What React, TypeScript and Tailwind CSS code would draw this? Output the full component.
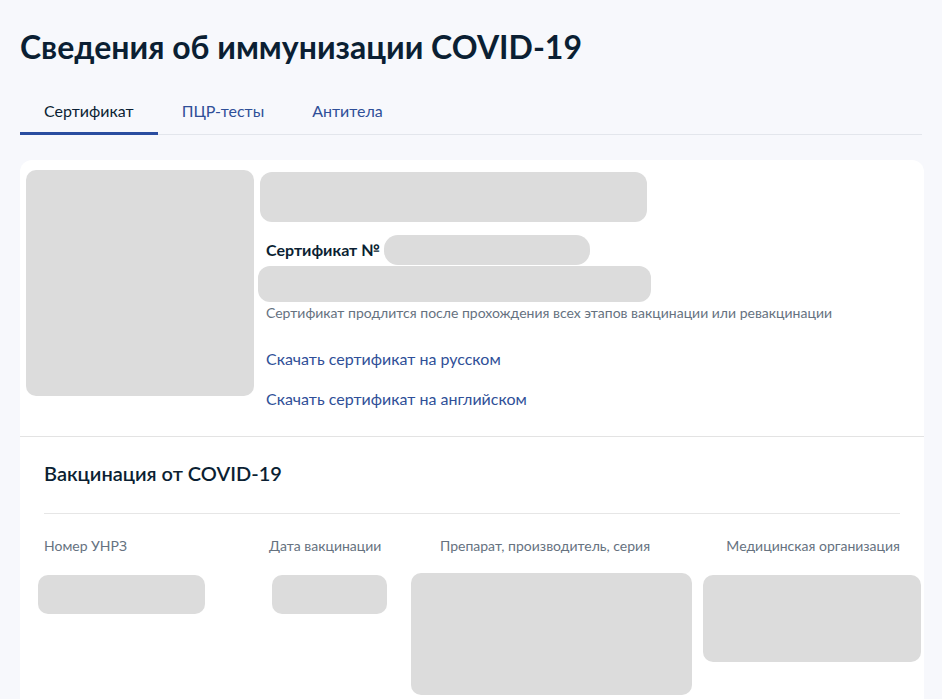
import React from 'react';

const Blank: React.FC<{ className: string }> = ({ className }) => (
  <div className={`shrink-0 bg-[#dcdcdc] ${className}`} />
);

const tabs = [
  { label: 'Сертификат', active: true },
  { label: 'ПЦР-тесты', active: false },
  { label: 'Антитела', active: false },
];

const columns = ['Номер УНРЗ', 'Дата вакцинации', 'Препарат, производитель, серия', 'Медицинская организация'];

const App: React.FC = () => {
  return (
    <div className="min-h-[699px] w-[942px] overflow-hidden bg-[#f7f8fc] font-['Lato',sans-serif] text-[#0b1f33]">
      <div className="px-5 pt-[27px]">
        <h1 className="text-[32px] font-bold leading-[40px]">Сведения об иммунизации COVID-19</h1>

        {/* вкладки */}
        <div className="mt-[34px] flex border-b border-[#e3e6ec]">
          {tabs.map((tab) => (
            <div
              key={tab.label}
              className={`-mb-px px-6 pb-[11px] text-[16px] leading-5 ${
                tab.active ? 'border-b-[3px] border-[#2a4da0] text-[#0b1f33]' : 'border-b-[3px] border-transparent text-[#2f4f98]'
              }`}
            >
              {tab.label}
            </div>
          ))}
        </div>

        {/* карточка сертификата */}
        <div className="mt-[25px] w-[904px] rounded-t-xl bg-white">
          <div className="flex gap-[6px] pl-[6px] pt-[10px] pb-[27px]">
            <Blank className="h-[226px] w-[228px] rounded-[10px]" />
            <div className="flex flex-col">
              <Blank className="mt-[2px] h-[50px] w-[387px] rounded-[12px]" />
              <div className="mt-[13px] flex items-center">
                <span className="ml-[6px] text-[16px] font-bold leading-5">Сертификат №</span>
                <Blank className="ml-[4px] h-[30px] w-[206px] rounded-[14px]" />
              </div>
              <Blank className="-ml-[2px] mt-[1px] h-[36px] w-[393px] rounded-[12px]" />
              <p className="ml-[6px] mt-[1px] text-[14px] leading-5 text-[#66727f]">
                Сертификат продлится после прохождения всех этапов вакцинации или ревакцинации
              </p>
              <a className="ml-[6px] mt-[26px] text-[16px] leading-5 text-[#2f4f98]">Скачать сертификат на русском</a>
              <a className="ml-[6px] mt-[20px] text-[16px] leading-5 text-[#2f4f98]">Скачать сертификат на английском</a>
            </div>
          </div>

          <div className="border-t border-[#e3e3e3] px-6 pt-[22px]">
            <h2 className="text-[20px] font-semibold leading-7">Вакцинация от COVID-19</h2>
            <div className="mt-[26px] border-t border-[#e6e6e6]" />
            <div className="mt-[22px] flex text-[14px] leading-5 text-[#66727f]">
              <div className="w-[225px]">{columns[0]}</div>
              <div className="w-[171px]">{columns[1]}</div>
              <div className="w-[286px]">{columns[2]}</div>
              <div className="flex-1 text-right">{columns[3]}</div>
            </div>
            <div className="mt-[17px] flex items-start pb-4">
              <Blank className="-ml-[6px] mt-[2px] h-[39px] w-[167px] rounded-[10px]" />
              <Blank className="ml-[67px] mt-[2px] h-[39px] w-[115px] rounded-[10px]" />
              <Blank className="ml-[24px] h-[122px] w-[281px] rounded-[10px]" />
              <Blank className="ml-[11px] mt-[2px] h-[87px] w-[218px] rounded-[10px]" />
            </div>
          </div>
        </div>
      </div>
    </div>
  );
};

export default App;
